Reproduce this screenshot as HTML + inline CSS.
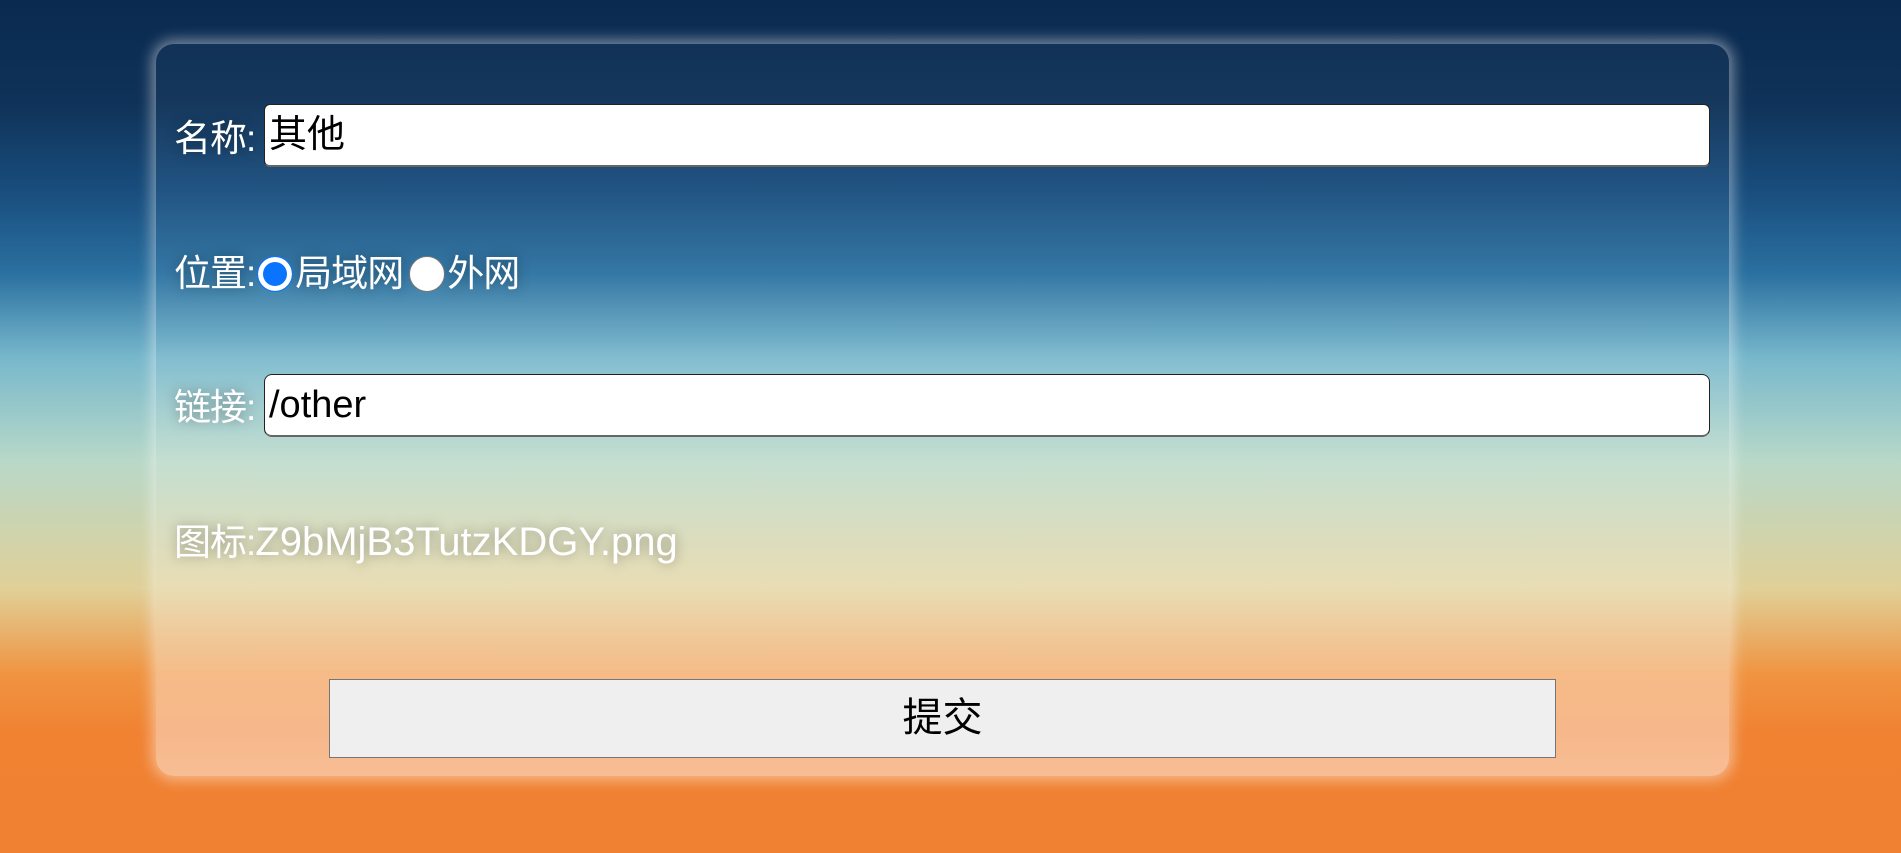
<!DOCTYPE html>
<html><head><meta charset="utf-8"><style>
html,body{margin:0;width:1901px;height:853px;overflow:hidden}
body{background:linear-gradient(to bottom,#0b2a50 0%,#0f3258 12%,#184c7c 22%,#2a70a0 32%,#78b8cc 42%,#b8d8c8 54%,#e0d098 69%,#f09442 79%,#f08232 86%,#f08032 100%);font-family:"Liberation Sans","Noto Sans CJK SC",sans-serif;position:relative}
.card{position:absolute;left:156px;top:44px;width:1573px;height:732px;border-radius:18px;background:linear-gradient(to bottom,rgba(255,255,255,0.02),rgba(255,255,255,0.06) 40%,rgba(255,255,255,0.28) 75%,rgba(255,255,255,0.48));box-shadow:0 0 14px 4px rgba(255,255,255,0.45)}
.lab{position:absolute;left:174px;color:#fff;font-size:37px;line-height:40px;text-shadow:0 0 12px rgba(0,0,0,0.35);white-space:nowrap;letter-spacing:-1px}
.inp{position:absolute;left:264px;height:63px;background:#fff;border:1px solid #222;border-bottom:2px solid #666;border-radius:6px;font-size:38px;line-height:61px;box-sizing:border-box;width:1446px;padding-left:4px;color:#000}
.radio{display:inline-block;width:36px;height:36px;border-radius:50%;background:#fff;box-sizing:border-box;vertical-align:-6px;margin:0 2px}
.btn{position:absolute;left:329px;top:679px;width:1227px;height:79px;background:#efefef;border:1px solid #767676;box-sizing:border-box;text-align:center;font-size:40px;line-height:77px;color:#000}
</style></head><body>
<div class="card"></div>
<div class="lab" style="top:119px">名称:</div>
<div class="inp" style="top:104px">其他</div>
<div class="lab" style="top:254px">位置:<span class="radio" style="background:#0a74ff;border:1px solid #0a74ff;box-shadow:inset 0 0 0 5px #fff"></span>局域网<span class="radio" style="border:1px solid #777;margin-left:6px"></span>外网</div>
<div class="lab" style="top:388px">链接:</div>
<div class="inp" style="top:374px;border-radius:8px">/other</div>
<div class="lab" style="top:522px">图标:<span style="font-size:40px;letter-spacing:0">Z9bMjB3TutzKDGY.png</span></div>
<div class="btn">提交</div>
</body></html>
